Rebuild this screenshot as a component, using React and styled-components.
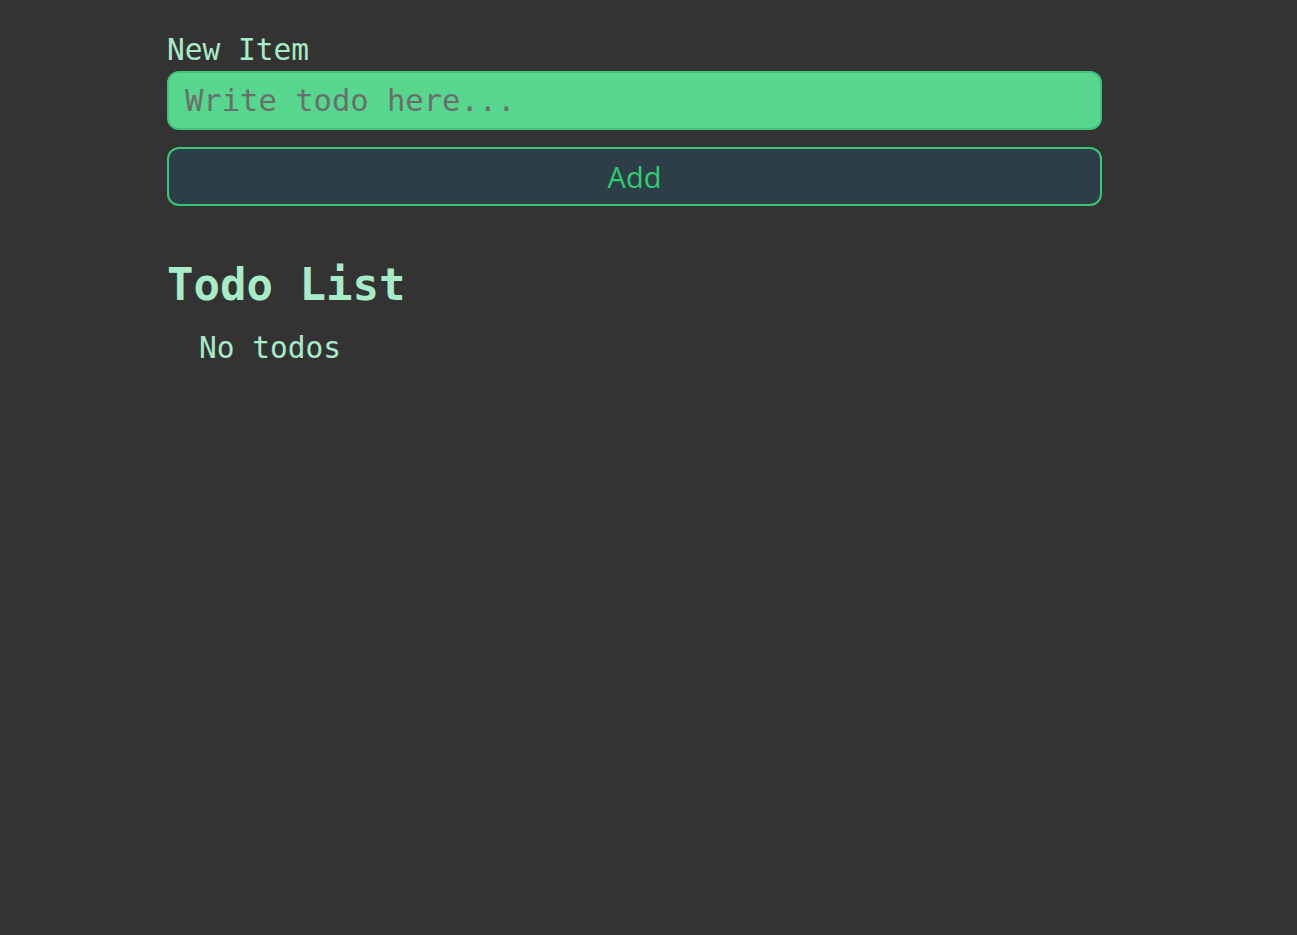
import React, { useState } from "react";
import styled, { createGlobalStyle } from "styled-components";

const GlobalStyle = createGlobalStyle`
  body {
    margin: 0;
    background: #333333;
    font-family: "DejaVu Sans Mono", "Liberation Mono", monospace;
    color: #a8ebc8;
  }
`;

const Page = styled.div`
  width: 935px;
  margin: 0 0 0 167px;
  padding-top: 32px;
`;

const Form = styled.form`
  display: flex;
  flex-direction: column;
`;

const Label = styled.label`
  font-size: 29.5px;
  line-height: 36px;
  color: #a8ebc8;
  margin-bottom: 3px;
`;

const Input = styled.input`
  box-sizing: border-box;
  height: 59px;
  padding: 0 16px;
  border: 2px solid #3fc27a;
  border-radius: 12px;
  background: #57d68d;
  font-family: "DejaVu Sans Mono", "Liberation Mono", monospace;
  font-size: 30.5px;
  color: #333;
  outline: none;

  &::placeholder {
    color: #6b6f6c;
  }
`;

const AddButton = styled.button`
  box-sizing: border-box;
  height: 59px;
  margin-top: 17px;
  border: 2px solid #37c877;
  border-radius: 12px;
  background: #2d3e48;
  color: #2ecc71;
  font-family: "Open Sans", "Noto Sans", sans-serif;
  font-size: 29px;
  cursor: pointer;
`;

const Heading = styled.h1`
  margin: 51px 0 0;
  font-size: 44px;
  line-height: 56px;
  font-weight: bold;
  color: #a8ebc8;
`;

const List = styled.ul`
  list-style: none;
  margin: 17px 0 0;
  padding-left: 32px;
`;

const Empty = styled.li`
  font-size: 29.5px;
  line-height: 36px;
`;

const App = () => {
  const [text, setText] = useState("");
  const [todos, setTodos] = useState([]);

  const handleSubmit = (e) => {
    e.preventDefault();
    if (!text.trim()) return;
    setTodos([...todos, text]);
    setText("");
  };

  return (
    <>
      <GlobalStyle />
      <Page>
        <Form onSubmit={handleSubmit}>
          <Label htmlFor="item">New Item</Label>
          <Input
            id="item"
            value={text}
            onChange={(e) => setText(e.target.value)}
            placeholder="Write todo here..."
          />
          <AddButton type="submit">Add</AddButton>
        </Form>
        <Heading>Todo List</Heading>
        <List>
          {todos.length === 0 && <Empty>No todos</Empty>}
          {todos.map((todo, index) => (
            <Empty key={index}>{todo}</Empty>
          ))}
        </List>
      </Page>
    </>
  );
};

export default App;
